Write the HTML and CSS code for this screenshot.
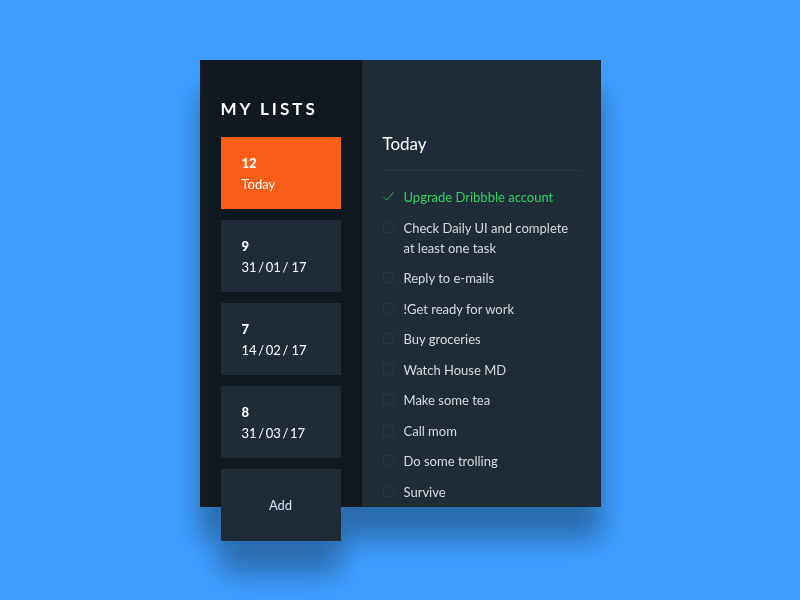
FILE: index.html
```
<!DOCTYPE html>
<html lang="en">
<head>
<meta charset="utf-8">
<meta name="viewport" content="width=device-width, initial-scale=1">
<title>My Lists</title>
<link rel="stylesheet" href="styles.css">
</head>
<body>
<main class="card">
  <nav class="lists" aria-labelledby="lists-title">
    <h1 class="lists-title" id="lists-title">MY LISTS</h1>
    <div class="tiles">
      <button class="tile tile-active" type="button"><span class="count">12</span><span class="date">Today</span></button>
      <button class="tile" type="button"><span class="count">9</span><span class="date">31&thinsp;/&thinsp;01&thinsp;/&thinsp;&thinsp;17</span></button>
      <button class="tile" type="button"><span class="count">7</span><span class="date">14&thinsp;/&thinsp;02&thinsp;/&thinsp;&thinsp;17</span></button>
      <button class="tile" type="button"><span class="count">8</span><span class="date">31&thinsp;/&thinsp;03&thinsp;/&thinsp;17</span></button>
      <button class="tile tile-add" type="button">Add</button>
    </div>
  </nav>
  <section class="tasks" aria-labelledby="tasks-title">
    <h2 class="tasks-title" id="tasks-title">Today</h2>
    <ul class="task-list">
      <li><label class="task"><input type="checkbox" checked><svg class="tick" viewBox="0 0 12 12" aria-hidden="true"><path d="M0.5 6.5 4 10 11.5 1.5"/></svg><span>Upgrade Dribbble account</span></label></li>
      <li><label class="task"><input type="checkbox"><span>Check Daily UI and complete at least one task</span></label></li>
      <li><label class="task"><input type="checkbox"><span>Reply to e-mails</span></label></li>
      <li><label class="task"><input type="checkbox"><span>!Get ready for work</span></label></li>
      <li><label class="task"><input type="checkbox"><span>Buy groceries</span></label></li>
      <li><label class="task"><input type="checkbox"><span>Watch House MD</span></label></li>
      <li><label class="task"><input type="checkbox"><span>Make some tea</span></label></li>
      <li><label class="task"><input type="checkbox"><span>Call mom</span></label></li>
      <li><label class="task"><input type="checkbox"><span>Do some trolling</span></label></li>
      <li><label class="task"><input type="checkbox"><span>Survive</span></label></li>
    </ul>
  </section>
</main>
</body>
</html>
```
FILE: styles.css
```
* {
  box-sizing: border-box;
}

body {
  margin: 0;
  padding: 60px 20px 93px;
  min-height: 100vh;
  background: #3e9eff;
  color: #d7dadc;
  font: 13px/20px Lato, "Open Sans", sans-serif;
}

.card {
  display: grid;
  grid-template-columns: 162px 1fr;
  max-width: 401px;
  margin: 0 auto;
  filter: drop-shadow(0 32px 14px rgba(0, 0, 0, 0.32));
}

.lists {
  padding: 37px 21px 0;
  background: #111920;
}

.lists-title {
  margin: 0 0 16px;
  color: #fff;
  font-size: 17px;
  font-weight: 700;
  line-height: 24px;
  letter-spacing: 3px;
  white-space: nowrap;
}

/* The last tile hangs below the card. */
.tiles {
  display: grid;
  gap: 11px;
  margin-bottom: -34px;
}

.tile {
  display: flex;
  flex-direction: column;
  justify-content: center;
  height: 72px;
  padding: 2px 21px 0;
  border: 0;
  background: #1f2c38;
  color: #fff;
  font: inherit;
  text-align: left;
  line-height: 21px;
  cursor: pointer;
}

.tile-active {
  background: #f85e18;
}

.tile-add {
  align-items: center;
  padding: 0 21px;
  color: #cfe2f0;
  text-align: center;
}

.count {
  font-weight: 900;
}

.tasks {
  display: flex;
  flex-direction: column;
  padding: 72px 21px 5px;
  background: #1f2c38;
}

.tasks-title {
  margin: 0 0 16px;
  padding-bottom: 14px;
  border-bottom: 1px solid #2d3a46;
  color: #fff;
  font-size: 17px;
  font-weight: 400;
  line-height: 24px;
}

.task-list {
  display: flex;
  flex: 1;
  flex-direction: column;
  justify-content: space-between;
  margin: 0;
  padding: 0;
  list-style: none;
}

.task {
  display: flex;
  align-items: flex-start;
  gap: 10px;
  cursor: pointer;
}

.task input {
  appearance: none;
  flex: none;
  width: 11px;
  height: 11px;
  margin: 4px 0 0;
  border: 1px solid #293641;
}

.tick {
  display: none;
  flex: none;
  width: 11px;
  height: 11px;
  margin-top: 4px;
  fill: none;
  stroke: #2ec45c;
}

.task input:checked {
  position: absolute;
  opacity: 0;
}

.task input:checked + .tick {
  display: block;
}

.task input:checked ~ span {
  color: #2bd45f;
}
```
